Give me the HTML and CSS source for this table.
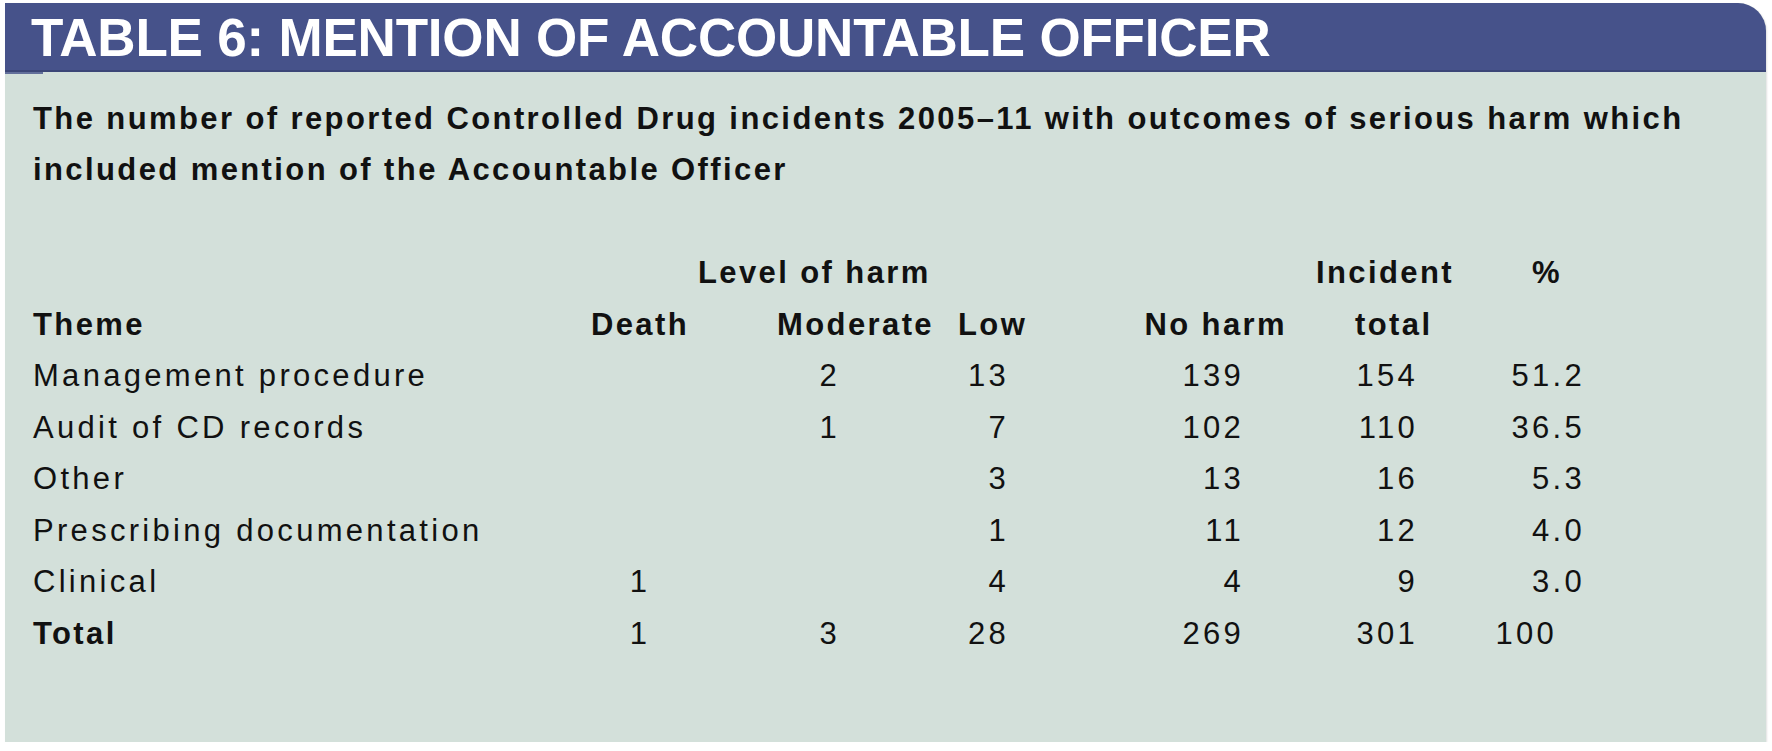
FILE: index.html
```html
<!DOCTYPE html>
<html lang="en">
<head>
<meta charset="utf-8">
<title>Table 6: Mention of Accountable Officer</title>
<link rel="stylesheet" href="styles.css">
</head>
<body>
<div class="panel">
  <div class="band"><h1 class="title">TABLE 6: MENTION OF ACCOUNTABLE OFFICER</h1></div>
  <div class="body">
    <p class="subtitle">The number of reported Controlled Drug incidents 2005–11 with outcomes of serious harm which<br>included mention of the Accountable Officer</p>
    <table class="data">
      <colgroup>
        <col class="w-theme"><col class="w-death"><col class="w-mod"><col class="w-low"><col class="w-nh"><col class="w-tot"><col class="w-pct">
      </colgroup>
      <thead>
        <tr>
          <th></th>
          <th colspan="3" class="h-level">Level of harm</th>
          <th></th>
          <th class="h-inc">Incident</th>
          <th class="h-pct">%</th>
        </tr>
        <tr>
          <th class="h-theme">Theme</th>
          <th class="c-death">Death</th>
          <th class="h-mod">Moderate</th>
          <th class="h-low">Low</th>
          <th class="h-nh">No harm</th>
          <th class="h-total">total</th>
          <th></th>
        </tr>
      </thead>
      <tbody>
        <tr><td class="theme">Management procedure</td><td class="c-death"></td><td class="v-mod">2</td><td class="v-low">13</td><td class="v-nh">139</td><td class="v-tot">154</td><td class="v-pct">51.2</td></tr>
        <tr><td class="theme">Audit of CD records</td><td class="c-death"></td><td class="v-mod">1</td><td class="v-low">7</td><td class="v-nh">102</td><td class="v-tot">110</td><td class="v-pct">36.5</td></tr>
        <tr><td class="theme">Other</td><td class="c-death"></td><td class="v-mod"></td><td class="v-low">3</td><td class="v-nh">13</td><td class="v-tot">16</td><td class="v-pct">5.3</td></tr>
        <tr><td class="theme">Prescribing documentation</td><td class="c-death"></td><td class="v-mod"></td><td class="v-low">1</td><td class="v-nh">11</td><td class="v-tot">12</td><td class="v-pct">4.0</td></tr>
        <tr><td class="theme">Clinical</td><td class="c-death">1</td><td class="v-mod"></td><td class="v-low">4</td><td class="v-nh">4</td><td class="v-tot">9</td><td class="v-pct">3.0</td></tr>
        <tr class="total"><td class="theme">Total</td><td class="c-death">1</td><td class="v-mod">3</td><td class="v-low">28</td><td class="v-nh">269</td><td class="v-tot">301</td><td class="v-pct v-pct-int">100</td></tr>
      </tbody>
    </table>
  </div>
</div>
</body>
</html>
```

FILE: styles.css
```css
html, body {
  margin: 0;
  padding: 0;
  background: #ffffff;
}

body {
  font-family: "Liberation Sans", Arial, sans-serif;
  color: #111111;
}

.panel {
  margin: 3px 0 0 5px;
  width: 1761px;
  height: 739px;
  background: #d3e0da;
  box-shadow: 1px 1px 2px rgba(0, 0, 0, 0.12);
  border-top-right-radius: 28px;
}

.band {
  position: relative;
  height: 67px;
  background: #46528a;
  border-bottom: 2px solid #3b4677;
  border-top-right-radius: 28px;
  padding-left: 26px;
}

.band::after {
  content: "";
  position: absolute;
  left: 0;
  bottom: -4px;
  width: 38px;
  height: 2px;
  background: #46528a;
  opacity: 0.8;
}

.title {
  margin: 0;
  font-size: 53px;
  line-height: 69px;
  font-weight: 700;
  color: #ffffff;
  letter-spacing: -0.2px;
  white-space: nowrap;
}

.body {
  padding: 20.5px 0 0 28px;
}

.subtitle {
  margin: 0;
  font-size: 31px;
  line-height: 51.5px;
  font-weight: 700;
  letter-spacing: 2.4px;
  white-space: nowrap;
}

.data {
  margin-top: 51.5px;
  border-collapse: collapse;
  border-spacing: 0;
  table-layout: fixed;
  font-size: 31px;
  line-height: 51.5px;
}

.w-theme { width: 527px; }
.w-death { width: 160px; }
.w-mod { width: 220px; }
.w-low { width: 100px; }
.w-nh { width: 260px; }
.w-tot { width: 170px; }
.w-pct { width: 150px; }

.data th,
.data td {
  padding: 0;
  height: 51.5px;
  white-space: nowrap;
  vertical-align: baseline;
}

.data th {
  font-weight: 700;
  letter-spacing: 2.4px;
  text-align: left;
}

.data td {
  font-weight: 400;
  letter-spacing: 3.3px;
  text-align: right;
}

.data td.theme { text-align: left; }
.data .total td.theme { font-weight: 700; letter-spacing: 2.4px; }

.data th.c-death,
.data td.c-death { text-align: center; }

.data th.h-level { padding-left: 138px; }
.data th.h-mod { text-align: right; padding-right: 6px; }
.data th.h-low { padding-left: 18px; }
.data th.h-nh { text-align: right; padding-right: 13px; }
.data th.h-inc { padding-left: 16px; }
.data th.h-total { padding-left: 55px; }
.data th.h-pct { padding-left: 62px; }

.data td.v-mod { padding-right: 100px; }
.data td.v-low { padding-right: 31px; }
.data td.v-nh { padding-right: 56px; }
.data td.v-tot { padding-right: 52px; }
.data td.v-pct { padding-right: 35px; }
.data td.v-pct-int { padding-right: 63px; }
```
